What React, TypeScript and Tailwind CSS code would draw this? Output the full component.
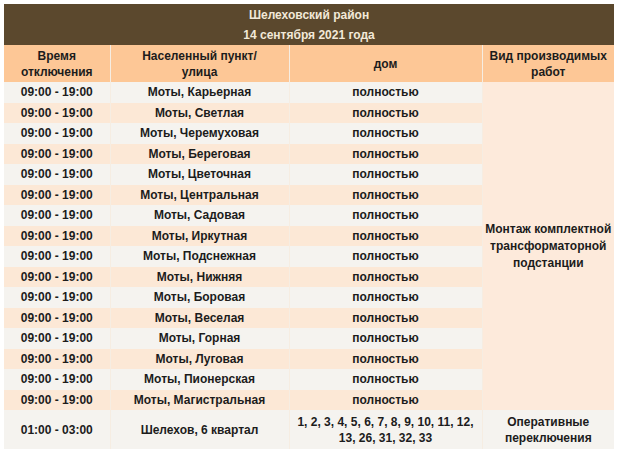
import React from 'react';

const streets = [
  'Карьерная',
  'Светлая',
  'Черемуховая',
  'Береговая',
  'Цветочная',
  'Центральная',
  'Садовая',
  'Иркутная',
  'Подснежная',
  'Нижняя',
  'Боровая',
  'Веселая',
  'Горная',
  'Луговая',
  'Пионерская',
  'Магистральная',
];

const cell = 'border-r border-[#f6ede2] text-center align-middle p-0';

export default function App() {
  return (
    <div className="bg-white w-[620px] h-[449px] overflow-hidden pt-[4px] pl-[4px]">
      <table
        className="border-collapse table-fixed w-[610px] text-[12px] font-bold text-[#1c1c1c] leading-[16px]"
        style={{ fontFamily: '"Liberation Sans", Arial, sans-serif' }}
      >
        <colgroup>
          <col className="w-[106px]" />
          <col className="w-[179px]" />
          <col className="w-[193px]" />
          <col className="w-[132px]" />
        </colgroup>
        <thead>
          <tr className="bg-[#5b482d] h-[20px]">
            <th colSpan={4} className="text-[#f2e8d8] font-bold text-center p-0 pt-[2px]">
              Шелеховский район
            </th>
          </tr>
          <tr className="bg-[#5b482d] h-[21px]">
            <th colSpan={4} className="text-[#f2e8d8] font-bold text-center p-0">
              14 сентября 2021 года
            </th>
          </tr>
          <tr className="bg-[#fdc796] h-[37px]">
            <th className={cell + ' font-bold'}>
              Время
              <br />
              отключения
            </th>
            <th className={cell + ' font-bold'}>
              Населенный пункт/
              <br />
              улица
            </th>
            <th className={cell + ' font-bold'}>дом</th>
            <th className="text-center align-middle p-0 font-bold whitespace-nowrap">
              Вид производимых
              <br />
              работ
            </th>
          </tr>
        </thead>
        <tbody>
          {streets.map((s, i) => (
            <tr key={s} className={i % 2 === 0 ? 'bg-[#f5f3ef] h-[20.5px]' : 'bg-[#fce8d6] h-[20.5px]'}>
              <td className={cell}>09:00 - 19:00</td>
              <td className={cell}>Моты, {s}</td>
              <td className={cell}>полностью</td>
              {i === 0 && (
                <td
                  rowSpan={16}
                  className="bg-[#fdeadb] text-center align-middle p-0 whitespace-nowrap leading-[17px]"
                >
                  Монтаж комплектной
                  <br />
                  трансформаторной
                  <br />
                  подстанции
                </td>
              )}
            </tr>
          ))}
          <tr className="bg-[#f5f3ef] h-[40px]">
            <td className={cell}>01:00 - 03:00</td>
            <td className={cell}>Шелехов, 6 квартал</td>
            <td className={cell}>
              1, 2, 3, 4, 5, 6, 7, 8, 9, 10, 11, 12,
              <br />
              13, 26, 31, 32, 33
            </td>
            <td className="text-center align-middle p-0">
              Оперативные
              <br />
              переключения
            </td>
          </tr>
        </tbody>
      </table>
    </div>
  );
}
